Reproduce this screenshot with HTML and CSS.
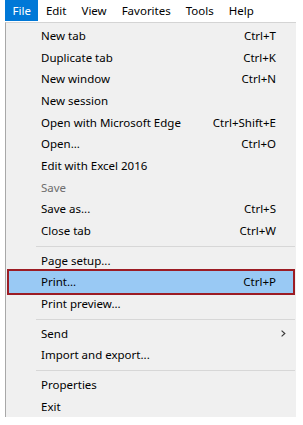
FILE: index.html
```html
<!DOCTYPE html>
<html lang="en">
<head>
    <meta charset="UTF-8">
    <meta name="viewport" content="width=device-width, initial-scale=1.0">
    <title>File menu</title>
    <link rel="stylesheet" href="styles.css">
</head>
<body>
    <div class="menubar">
        <span class="menu-title active">File</span>
        <span class="menu-title">Edit</span>
        <span class="menu-title">View</span>
        <span class="menu-title">Favorites</span>
        <span class="menu-title">Tools</span>
        <span class="menu-title">Help</span>
    </div>

    <div class="dropdown">
        <div class="item"><span>New tab</span><span class="key">Ctrl+T</span></div>
        <div class="item"><span>Duplicate tab</span><span class="key">Ctrl+K</span></div>
        <div class="item"><span>New window</span><span class="key">Ctrl+N</span></div>
        <div class="item"><span>New session</span></div>
        <div class="item"><span>Open with Microsoft Edge</span><span class="key">Ctrl+Shift+E</span></div>
        <div class="item"><span>Open...</span><span class="key">Ctrl+O</span></div>
        <div class="item"><span>Edit with Excel 2016</span></div>
        <div class="item disabled"><span>Save</span></div>
        <div class="item"><span>Save as...</span><span class="key">Ctrl+S</span></div>
        <div class="item"><span>Close tab</span><span class="key">Ctrl+W</span></div>

        <div class="separator"></div>

        <div class="item"><span>Page setup...</span></div>
        <div class="item selected"><span>Print...</span><span class="key">Ctrl+P</span></div>
        <div class="item"><span>Print preview...</span></div>

        <div class="separator"></div>

        <div class="item submenu">
            <span>Send</span>
            <svg class="arrow" width="5" height="7" viewBox="0 0 5 7">
                <path d="M0.6 0.6L3.8 3.5L0.6 6.4" fill="none" stroke="#3a3a3a" stroke-width="1.2"/>
            </svg>
        </div>
        <div class="item"><span>Import and export...</span></div>

        <div class="separator"></div>

        <div class="item"><span>Properties</span></div>
        <div class="item"><span>Exit</span></div>
    </div>
</body>
</html>
```

FILE: styles.css
```css
* {
    margin: 0;
    padding: 0;
    box-sizing: border-box;
    font-family: "Noto Sans", "Segoe UI", sans-serif;
}

body {
    width: 303px;
    height: 425px;
    background: #ffffff;
    overflow: hidden;
}

/* top menu bar */
.menubar {
    display: flex;
    height: 22px;
    padding-left: 5px;
    font-size: 11.5px;
}

.menu-title {
    height: 21px;
    line-height: 21px;
    padding: 0 7.5px;
    color: #000;
}

.menu-title.active {
    background: #0078d7;
    color: #fff;
}

/* dropdown panel */
.dropdown {
    margin-left: 5px;
    width: 291px;
    background: #f0f0f0;
    border-left: 1px solid #a8a8a8;
    border-top: 1px solid #d4d4d4;
    padding-top: 2px;
    font-size: 11.5px;
}

.item {
    display: flex;
    justify-content: space-between;
    align-items: center;
    height: 21.67px;
    line-height: 21.67px;
    padding: 0 20px 0 35px;
    color: #000;
}

.item.disabled {
    color: #6d6d6d;
}

/* hovered entry with the red annotation frame */
.item.selected {
    margin: 0 3px;
    padding: 0 17px 0 32px;
    background: #99c9f4;
    outline: 2px solid #9c1c24;
}

.item.submenu {
    padding-right: 10px;
}

.arrow {
    display: block;
}

.separator {
    height: 8px;
    padding-top: 4px;
}

.separator::after {
    content: "";
    display: block;
    height: 1px;
    margin: 0 1px 0 30px;
    background: #d7d7d7;
}
```
